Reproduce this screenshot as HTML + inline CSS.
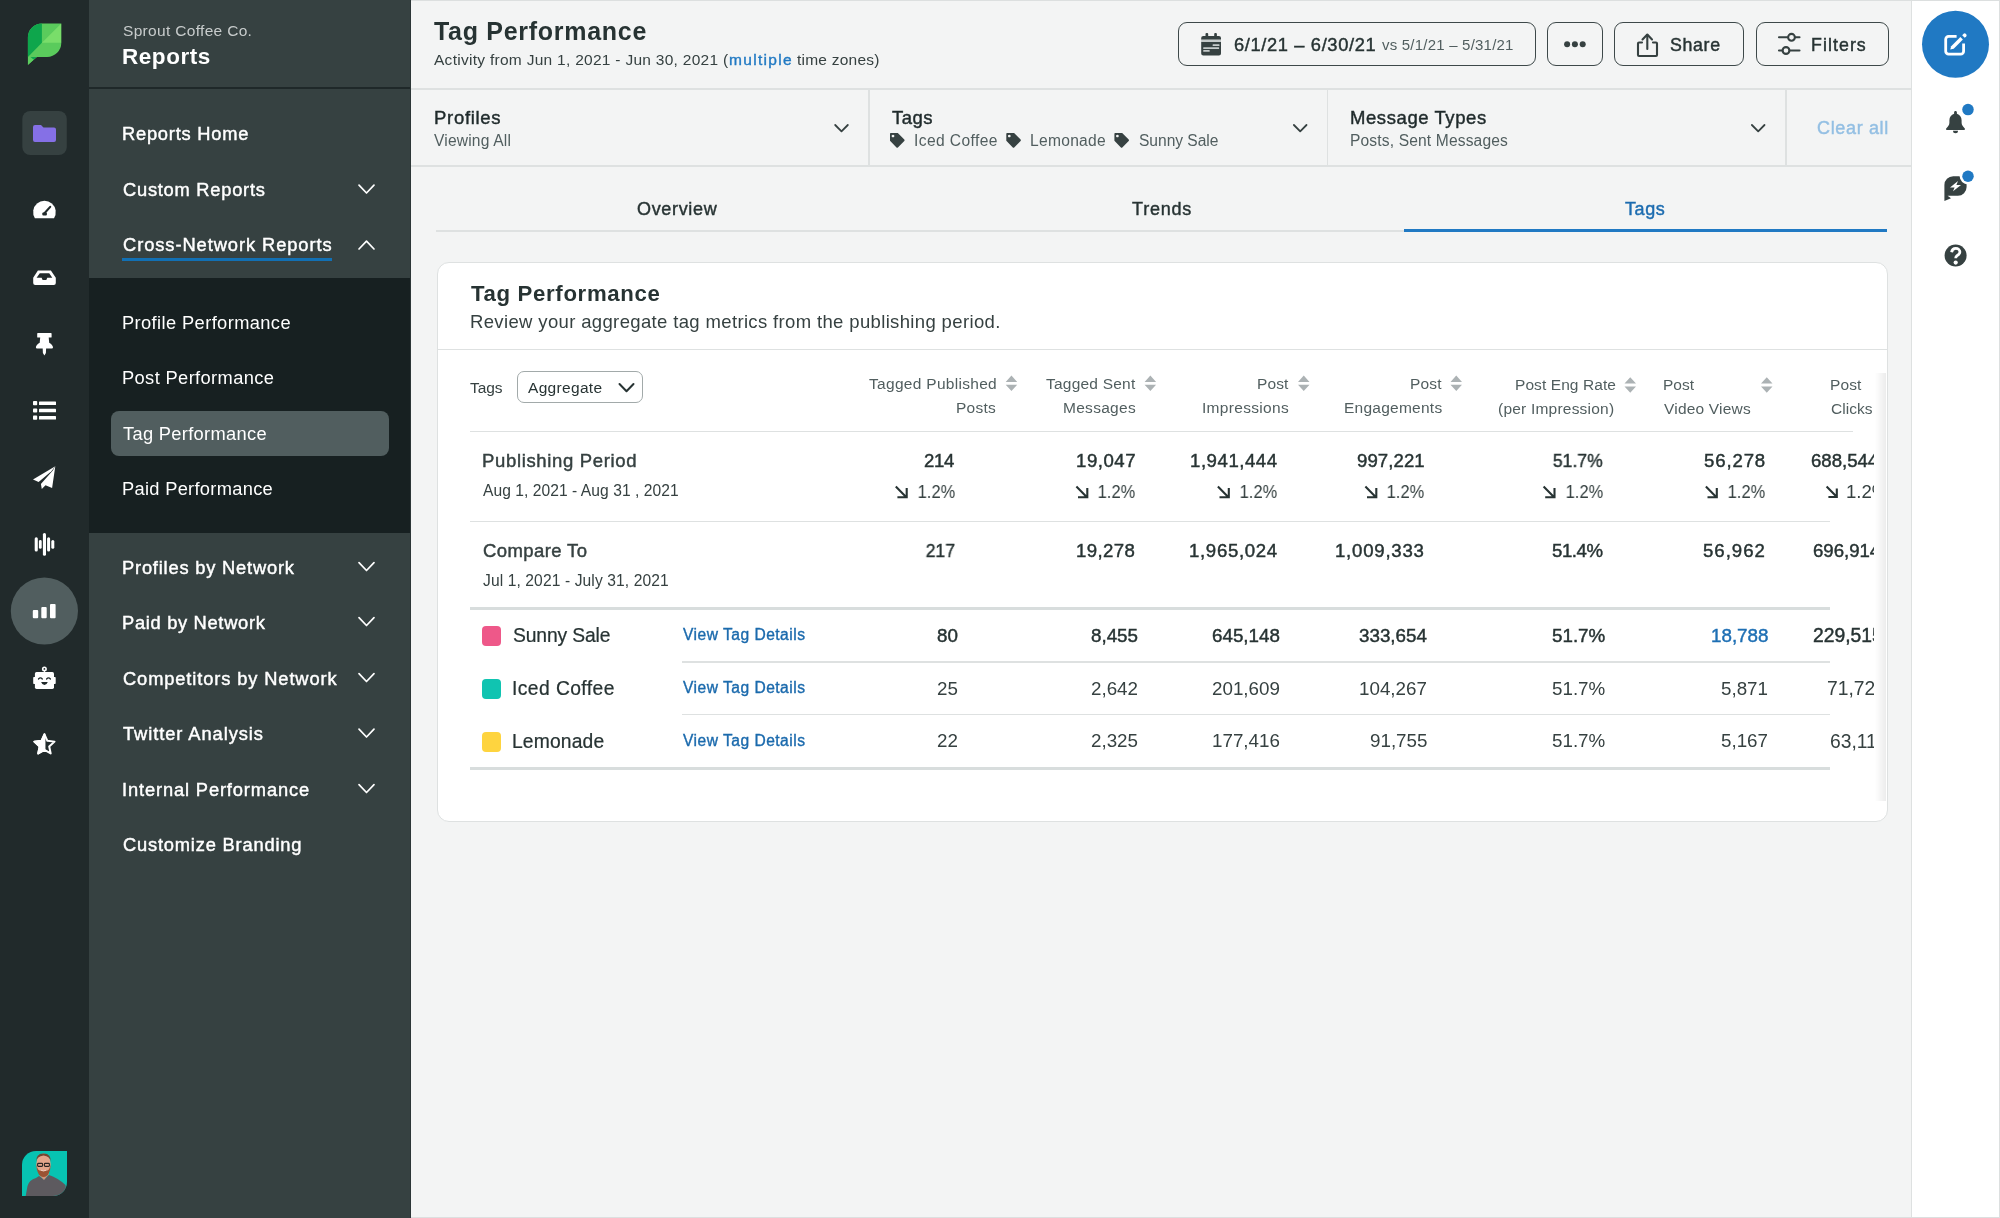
<!DOCTYPE html>
<html><head><meta charset="utf-8"><title>Tag Performance</title>
<style>
html,body{margin:0;padding:0;}
body{width:2000px;height:1218px;position:relative;overflow:hidden;background:#F3F4F4;font-family:"Liberation Sans",sans-serif;}
.t{position:absolute;line-height:1;white-space:nowrap;will-change:transform;}
.b{position:absolute;box-sizing:border-box;}
svg{position:absolute;overflow:visible;}
</style></head><body>
<div class="b" style="left:0px;top:0px;width:89px;height:1218px;background:#212a2b;"></div>
<div class="b" style="left:89px;top:0px;width:322px;height:1218px;background:#364141;"></div>
<div class="b" style="left:89px;top:87px;width:322px;height:2px;background:#1f2829;"></div>
<div class="b" style="left:89px;top:278px;width:322px;height:255px;background:#172021;"></div>
<div class="b" style="left:111px;top:411px;width:278px;height:44.5px;background:#515e5f;border-radius:8px;"></div>
<div class="b" style="left:1911px;top:0px;width:89px;height:1218px;background:#ffffff;border-left:1.5px solid #dee1e1;"></div>
<svg style="left:0;top:0" width="89" height="1218" viewBox="0 0 89 1218">
<defs><clipPath id="leaf"><path d="M27.9,37.5 A14.1,14.1 0 0 1 42,23.5 H61.3 V42.8 A14.2,14.2 0 0 1 47.1,57 H36.9 L27.9,65 Z"/></clipPath></defs>
<g clip-path="url(#leaf)">
<rect x="20" y="20" width="50" height="50" fill="#5acb5c"/>
<polygon points="20,20 41.9,20 41.9,42.8 27.9,57 20,57" fill="#0ea64c"/>
<polygon points="41.9,42.8 61.3,42.8 61.3,23.5" fill="#79dd6a"/>
<polygon points="27.9,57 36.9,57 27.9,65" fill="#5dce60"/>
<polygon points="30.5,57 36.9,57 33.8,59.8" fill="#0ea64c"/>
</g>
<rect x="22.3" y="111" width="44.5" height="44" rx="8" fill="#364141"/>
<path d="M33,127 a2,2 0 0 1 2,-2 h6 l2.5,2.5 h10.5 a2,2 0 0 1 2,2 v10.5 a2,2 0 0 1 -2,2 h-19 a2,2 0 0 1 -2,-2 z" fill="#8570e6"/>
<path d="M34.9,218.2 A11.3,11.3 0 1 1 54,218.2 Z" fill="#fff"/>
<path d="M44,213.8 L50.2,206.9" stroke="#212a2b" stroke-width="2.1" stroke-linecap="round"/>
<rect x="42.3" y="212.4" width="4.6" height="3.1" rx="1" fill="#212a2b"/>
<path d="M37.9,270.6 H50.9 L55.8,277.8 V283 a2,2 0 0 1 -2,2 H35.2 a2,2 0 0 1 -2,-2 V277.8 Z M39.8,273.2 H49.2 L52.3,277.8 H47.3 L46.3,279.9 H42.6 L41.6,277.8 H36.6 Z" fill="#fff" fill-rule="evenodd"/>
<path d="M37.8,333.1 H51 a0.6,0.6 0 0 1 0.6,0.6 V336.9 a0.6,0.6 0 0 1 -0.6,0.6 H48.7 L49.2,342.7 C51.5,343.8 53,346 53,347.6 a0.8,0.8 0 0 1 -0.8,0.8 H46.1 L45.9,353 L44.4,355.6 L42.9,353 L42.7,348.4 H36.7 a0.8,0.8 0 0 1 -0.8,-0.8 C35.9,346 37.4,343.8 39.7,342.7 L40.2,337.5 H37.8 a0.6,0.6 0 0 1 -0.6,-0.6 V333.7 a0.6,0.6 0 0 1 0.6,-0.6 Z" fill="#fff"/>
<rect x="33" y="401" width="4.2" height="4.2" rx="0.8" fill="#fff"/>
<rect x="39" y="401.5" width="17" height="3.5" rx="0.6" fill="#fff"/>
<rect x="33" y="408.4" width="4.2" height="4.2" rx="0.8" fill="#fff"/>
<rect x="39" y="408.8" width="17" height="3.5" rx="0.6" fill="#fff"/>
<rect x="33" y="415.6" width="4.2" height="4.2" rx="0.8" fill="#fff"/>
<rect x="39" y="416" width="17" height="3.5" rx="0.6" fill="#fff"/>
<path d="M55.3,466.3 L33,479.5 L38.6,482 L51.4,471.2 Z" fill="#fff"/>
<path d="M55.3,466.3 L52.1,488 L45.5,485.3 L41.8,489 L40.9,483.9 L52.8,470.6 Z" fill="#fff"/>
<rect x="34.7" y="537.2" width="3.1" height="14.3" rx="1.5" fill="#fff"/>
<rect x="38.9" y="540" width="2.8" height="8.8" rx="1.4" fill="#fff"/>
<rect x="42.9" y="533" width="3.1" height="22.8" rx="1.5" fill="#fff"/>
<rect x="47.1" y="537.2" width="3" height="14.3" rx="1.5" fill="#fff"/>
<rect x="51.3" y="540" width="3" height="8.8" rx="1.5" fill="#fff"/>
<circle cx="44.4" cy="611" r="33.6" fill="#515e5f"/>
<rect x="32.8" y="610" width="5.4" height="8.2" rx="1" fill="#fff"/>
<rect x="41.3" y="607" width="5.4" height="11.2" rx="1" fill="#fff"/>
<rect x="50" y="604" width="5.6" height="14.2" rx="1" fill="#fff"/>
<circle cx="44.4" cy="668.9" r="2.5" fill="#fff"/>
<circle cx="44.4" cy="668.9" r="0.9" fill="#212a2b"/>
<rect x="43.9" y="670.5" width="1" height="2.5" fill="#fff"/>
<rect x="34.9" y="672.1" width="19.1" height="16.8" rx="1.6" fill="#fff"/>
<rect x="33.2" y="677" width="22.5" height="7.1" rx="0.8" fill="#fff"/>
<path d="M38.5,679 q1.9,-2.3 3.8,0 M46.6,679 q1.9,-2.3 3.8,0" fill="none" stroke="#212a2b" stroke-width="1.3" stroke-linecap="round"/>
<path d="M41.1,682 h6.7 q-1,2.9 -3.35,2.9 q-2.35,0 -3.35,-2.9 z" fill="#212a2b"/>
<polygon points="44.45,734.3 47.39,740.85 54.53,741.62 49.21,746.45 50.68,753.48 44.45,749.9 38.22,753.48 39.69,746.45 34.37,741.62 41.51,740.85" fill="none" stroke="#fff" stroke-width="2" stroke-linejoin="round"/>
<polygon points="44.45,734.3 41.51,740.85 34.37,741.62 39.69,746.45 38.22,753.48 44.45,749.9" fill="#fff" stroke="#fff" stroke-width="2" stroke-linejoin="round"/>
<defs><clipPath id="av"><path d="M22,1165 A14,14 0 0 1 36,1151 H67 V1182 A14,14 0 0 1 53,1196 H22 Z"/></clipPath></defs>
<g clip-path="url(#av)">
<rect x="20" y="1149" width="50" height="50" fill="#07c3b2"/>
<path d="M25.5,1197 L27.5,1186 Q29,1180 36,1178 L39,1176 L44,1179.5 L49,1175 Q58,1178 65.5,1185 L67,1197 Z" fill="#5d5a5f"/>
<path d="M39,1175 L44,1180 L49,1174 L48,1170 L40,1170 Z" fill="#d49278"/>
<ellipse cx="43.5" cy="1164.3" rx="7.2" ry="10.8" fill="#e3a58b"/>
<path d="M36.3,1163 Q36.5,1176.7 43.5,1177 Q50.5,1176.7 50.7,1163 Q50,1169.5 47.5,1170.5 Q43.5,1171.5 39.5,1170.5 Q37,1169.5 36.3,1163 Z" fill="#9a5333"/>
<path d="M36.2,1162 Q35.8,1153.2 43.5,1153.4 Q51.2,1153.2 50.8,1162 Q50.2,1156.2 43.5,1155.6 Q36.8,1156.2 36.2,1162 Z" fill="#734632"/>
<rect x="37.6" y="1163.4" width="5" height="3" rx="0.8" fill="none" stroke="#2b2624" stroke-width="1.1"/>
<rect x="44.4" y="1163.4" width="5" height="3" rx="0.8" fill="none" stroke="#2b2624" stroke-width="1.1"/>
<path d="M41,1170.2 Q43.5,1171.8 46,1170.2" fill="none" stroke="#f2d2c4" stroke-width="0.9"/>
</g>
</svg>
<div class="t" style="left:122.8px;top:23px;font-size:15.5px;color:#c8cccc;letter-spacing:0.32px;">Sprout Coffee Co.</div>
<div class="t" style="left:122.2px;top:46px;font-size:22.5px;font-weight:700;color:#ffffff;letter-spacing:0.55px;">Reports</div>
<div class="t" style="left:121.8px;top:125px;font-size:18.3px;-webkit-text-stroke:0.44px #ffffff;color:#ffffff;letter-spacing:0.779px;">Reports Home</div>
<div class="t" style="left:122.8px;top:181px;font-size:18.3px;-webkit-text-stroke:0.44px #ffffff;color:#ffffff;letter-spacing:0.756px;">Custom Reports</div>
<div class="t" style="left:122.8px;top:236px;font-size:18.3px;-webkit-text-stroke:0.44px #ffffff;color:#ffffff;letter-spacing:0.932px;">Cross-Network Reports</div>
<div class="b" style="left:122.2px;top:258.3px;width:210px;height:2.9px;background:#1270b4;"></div>
<div class="t" style="left:122.2px;top:314px;font-size:18.3px;color:#ffffff;letter-spacing:0.39px;">Profile Performance</div>
<div class="t" style="left:122.2px;top:369px;font-size:18.3px;color:#ffffff;letter-spacing:0.377px;">Post Performance</div>
<div class="t" style="left:123.2px;top:425px;font-size:18.3px;color:#ffffff;letter-spacing:0.312px;">Tag Performance</div>
<div class="t" style="left:122.2px;top:480px;font-size:18.3px;color:#ffffff;letter-spacing:0.296px;">Paid Performance</div>
<div class="t" style="left:121.8px;top:559px;font-size:18.3px;-webkit-text-stroke:0.44px #ffffff;color:#ffffff;letter-spacing:0.802px;">Profiles by Network</div>
<div class="t" style="left:121.8px;top:614px;font-size:18.3px;-webkit-text-stroke:0.44px #ffffff;color:#ffffff;letter-spacing:0.693px;">Paid by Network</div>
<div class="t" style="left:122.8px;top:670px;font-size:18.3px;-webkit-text-stroke:0.44px #ffffff;color:#ffffff;letter-spacing:0.883px;">Competitors by Network</div>
<div class="t" style="left:122.8px;top:725px;font-size:18.3px;-webkit-text-stroke:0.44px #ffffff;color:#ffffff;letter-spacing:0.928px;">Twitter Analysis</div>
<div class="t" style="left:121.8px;top:781px;font-size:18.3px;-webkit-text-stroke:0.44px #ffffff;color:#ffffff;letter-spacing:0.864px;">Internal Performance</div>
<div class="t" style="left:122.8px;top:836px;font-size:18.3px;-webkit-text-stroke:0.44px #ffffff;color:#ffffff;letter-spacing:0.813px;">Customize Branding</div>
<svg style="left:0;top:0" width="411" height="1218"><g fill="none" stroke="#fff" stroke-width="1.7" stroke-linecap="round" stroke-linejoin="round"><path d="M359,185.2 L366.5,193.0 L374,185.2" /><path d="M359,249.0 L366.5,241.2 L374,249.0" /><path d="M359,562.7 L366.5,570.5 L374,562.7" /><path d="M359,617.7 L366.5,625.5 L374,617.7" /><path d="M359,673.7 L366.5,681.5 L374,673.7" /><path d="M359,729.2 L366.5,737.0 L374,729.2" /><path d="M359,784.7 L366.5,792.5 L374,784.7" /></g></svg>
<div class="t" style="left:434.4px;top:19px;font-size:25px;font-weight:700;color:#273333;letter-spacing:0.709px;">Tag Performance</div>
<div class="t" style="left:434px;top:52px;font-size:15.5px;color:#364141;letter-spacing:0.282px;">Activity from Jun 1, 2021 - Jun 30, 2021 (</div>
<div class="t" style="left:728.9px;top:52px;font-size:15.5px;-webkit-text-stroke:0.37px #2079c3;color:#2079c3;letter-spacing:1.32px;">multiple</div>
<div class="t" style="left:796.8px;top:52px;font-size:15.5px;color:#364141;letter-spacing:0.235px;">time zones)</div>
<div class="b" style="left:1178px;top:22px;width:358px;height:44.3px;border:1.8px solid #3d4849;border-radius:9px;"></div>
<div class="b" style="left:1547px;top:22px;width:55.5px;height:44.3px;border:1.8px solid #3d4849;border-radius:9px;"></div>
<div class="b" style="left:1614px;top:22px;width:130px;height:44.3px;border:1.8px solid #3d4849;border-radius:9px;"></div>
<div class="b" style="left:1756px;top:22px;width:133px;height:44.3px;border:1.8px solid #3d4849;border-radius:9px;"></div>
<div class="t" style="left:1233.8px;top:36px;font-size:18.3px;-webkit-text-stroke:0.44px #273333;color:#273333;letter-spacing:0.632px;">6/1/21 &ndash; 6/30/21</div>
<div class="t" style="left:1381.7px;top:37px;font-size:15px;color:#515e5f;letter-spacing:0.214px;">vs 5/1/21 &ndash; 5/31/21</div>
<div class="t" style="left:1670px;top:37px;font-size:17.8px;-webkit-text-stroke:0.43px #273333;color:#273333;letter-spacing:0.653px;">Share</div>
<div class="t" style="left:1811px;top:37px;font-size:17.8px;-webkit-text-stroke:0.43px #273333;color:#273333;letter-spacing:1.06px;">Filters</div>
<svg style="left:0;top:0" width="2000" height="80">
<g fill="#364141">
<rect x="1205.5" y="33" width="2.7" height="4" rx="1"/><rect x="1214.2" y="33" width="2.7" height="4" rx="1"/>
<path d="M1201.2,38 a2.1,2.1 0 0 1 2.1,-2.1 h15.6 a2.1,2.1 0 0 1 2.1,2.1 v1.7 h-19.8 z"/>
<path d="M1201.2,41.7 h19.8 v11.7 a2.1,2.1 0 0 1 -2.1,2.1 h-15.6 a2.1,2.1 0 0 1 -2.1,-2.1 z"/>
</g>
<g fill="#c5caca"><rect x="1201.2" y="39.7" width="19.8" height="2"/><rect x="1212.6" y="44.3" width="6.9" height="1.6" rx="0.5"/><rect x="1203.2" y="47.2" width="15.9" height="1.8" rx="0.5"/><rect x="1203.2" y="50.1" width="6.5" height="1.6" rx="0.5"/></g>
<circle cx="1567.1" cy="44.2" r="3" fill="#364141"/><circle cx="1574.9" cy="44.2" r="3" fill="#364141"/><circle cx="1582.7" cy="44.2" r="3" fill="#364141"/>
<g fill="none" stroke="#364141" stroke-width="2.1" stroke-linecap="round" stroke-linejoin="round">
<path d="M1642,42.5 h-3 a1,1 0 0 0 -1,1 v11.5 a1,1 0 0 0 1,1 h17 a1,1 0 0 0 1,-1 v-11.5 a1,1 0 0 0 -1,-1 h-3"/>
<path d="M1647.3,49 V35"/><path d="M1642.5,39.5 L1647.3,34.5 L1652,39.5"/>
<path d="M1779,37.3 h8.2 M1795.8,37.3 h3.7 M1779,50.5 h3.2 M1789.8,50.5 h9.7"/>
<circle cx="1791.5" cy="37.3" r="3.4"/><circle cx="1786" cy="50.5" r="3.4"/>
</g>
</svg>
<div class="b" style="left:411px;top:88px;width:1500px;height:1.5px;background:#dee1e1;"></div>
<div class="b" style="left:411px;top:165px;width:1500px;height:1.5px;background:#dee1e1;"></div>
<div class="b" style="left:868px;top:88px;width:1.5px;height:78px;background:#dee1e1;"></div>
<div class="b" style="left:1326.5px;top:88px;width:1.5px;height:78px;background:#dee1e1;"></div>
<div class="b" style="left:1785px;top:88px;width:1.5px;height:78px;background:#dee1e1;"></div>
<div class="t" style="left:433.75px;top:109px;font-size:18.5px;-webkit-text-stroke:0.44px #1f2a2b;color:#1f2a2b;letter-spacing:0.696px;">Profiles</div>
<div class="t" style="left:434px;top:133px;font-size:15.6px;color:#515e5f;letter-spacing:0.173px;">Viewing All</div>
<div class="t" style="left:892.3px;top:109px;font-size:18.5px;-webkit-text-stroke:0.44px #1f2a2b;color:#1f2a2b;letter-spacing:0.477px;">Tags</div>
<div class="t" style="left:913.7px;top:133px;font-size:15.6px;color:#515e5f;letter-spacing:0.39px;">Iced Coffee</div>
<div class="t" style="left:1030px;top:133px;font-size:15.6px;color:#515e5f;letter-spacing:0.282px;">Lemonade</div>
<div class="t" style="left:1139px;top:133px;font-size:15.6px;color:#515e5f;letter-spacing:-0.032px;">Sunny Sale</div>
<div class="t" style="left:1349.6px;top:109px;font-size:18.5px;-webkit-text-stroke:0.44px #1f2a2b;color:#1f2a2b;letter-spacing:0.579px;">Message Types</div>
<div class="t" style="left:1349.6px;top:133px;font-size:15.6px;color:#515e5f;letter-spacing:0.14px;">Posts, Sent Messages</div>
<div class="t" style="left:1817.3px;top:119px;font-size:18px;-webkit-text-stroke:0.43px #93bfe3;color:#93bfe3;letter-spacing:0.656px;">Clear all</div>
<svg style="left:0;top:0" width="2000" height="200"><path transform="translate(890,133)" d="M0,0.8 a0.8,0.8 0 0 1 0.8,-0.8 H7.8 L14.3,6.6 a1,1 0 0 1 0,1.4 L7.9,14.4 a1,1 0 0 1 -1.4,0 L0,7.8 Z M3,1.65 a1.35,1.35 0 1 0 0.001,0 Z" fill="#364141" fill-rule="evenodd"/><path transform="translate(1006.3,133)" d="M0,0.8 a0.8,0.8 0 0 1 0.8,-0.8 H7.8 L14.3,6.6 a1,1 0 0 1 0,1.4 L7.9,14.4 a1,1 0 0 1 -1.4,0 L0,7.8 Z M3,1.65 a1.35,1.35 0 1 0 0.001,0 Z" fill="#364141" fill-rule="evenodd"/><path transform="translate(1114.4,133)" d="M0,0.8 a0.8,0.8 0 0 1 0.8,-0.8 H7.8 L14.3,6.6 a1,1 0 0 1 0,1.4 L7.9,14.4 a1,1 0 0 1 -1.4,0 L0,7.8 Z M3,1.65 a1.35,1.35 0 1 0 0.001,0 Z" fill="#364141" fill-rule="evenodd"/><g fill="none" stroke="#364141" stroke-width="1.8" stroke-linecap="round" stroke-linejoin="round"><path d="M835.2,125 L841.5,131.3 L847.8,125"/><path d="M1293.9,125 L1300.2,131.3 L1306.5,125"/><path d="M1751.9,125 L1758.2,131.3 L1764.5,125"/></g></svg>
<div class="b" style="left:436px;top:230px;width:1451px;height:1.5px;background:#dee1e1;"></div>
<div class="b" style="left:1404px;top:229px;width:483px;height:3px;background:#2079c3;"></div>
<div class="t" style="left:637px;top:200px;font-size:18px;-webkit-text-stroke:0.43px #273333;color:#273333;letter-spacing:0.665px;">Overview</div>
<div class="t" style="left:1131.5px;top:200px;font-size:18px;-webkit-text-stroke:0.43px #273333;color:#273333;letter-spacing:0.803px;">Trends</div>
<div class="t" style="left:1625.2px;top:200px;font-size:18px;-webkit-text-stroke:0.43px #1c6cb0;color:#1c6cb0;letter-spacing:0.616px;">Tags</div>
<div class="b" style="left:436.5px;top:261.5px;width:1451px;height:560.5px;background:#fff;border:1px solid #dee1e1;border-radius:12px;"></div>
<div class="b" style="left:437.5px;top:348.5px;width:1449px;height:1.5px;background:#dee1e1;"></div>
<div class="t" style="left:470.5px;top:283px;font-size:22.2px;font-weight:700;color:#273333;letter-spacing:0.659px;">Tag Performance</div>
<div class="t" style="left:470px;top:313px;font-size:18.5px;color:#364141;letter-spacing:0.355px;">Review your aggregate tag metrics from the publishing period.</div>
<div class="t" style="left:470.1px;top:380px;font-size:15.5px;color:#364141;letter-spacing:-0.064px;">Tags</div>
<div class="b" style="left:517px;top:371.3px;width:125.6px;height:32.1px;border:1.3px solid #a2aaaa;border-radius:7px;background:#fff;"></div>
<div class="t" style="left:528.4px;top:380px;font-size:15.5px;color:#273333;letter-spacing:0.324px;">Aggregate</div>
<div class="t" style="right:1002.98px;text-align:right;top:376px;font-size:15.5px;color:#515e5f;letter-spacing:0.299px;margin-right:-0.299px;">Tagged Published</div>
<div class="t" style="right:1003.85px;text-align:right;top:400px;font-size:15.5px;color:#515e5f;letter-spacing:0.271px;margin-right:-0.271px;">Posts</div>
<div class="t" style="right:864.79px;text-align:right;top:376px;font-size:15.5px;color:#515e5f;letter-spacing:0.216px;margin-right:-0.216px;">Tagged Sent</div>
<div class="t" style="right:864.3499999999999px;text-align:right;top:400px;font-size:15.5px;color:#515e5f;letter-spacing:0.287px;margin-right:-0.287px;">Messages</div>
<div class="t" style="right:711.29px;text-align:right;top:376px;font-size:15.5px;color:#515e5f;letter-spacing:0.097px;margin-right:-0.097px;">Post</div>
<div class="t" style="right:710.8499999999999px;text-align:right;top:400px;font-size:15.5px;color:#515e5f;letter-spacing:0.31px;margin-right:-0.31px;">Impressions</div>
<div class="t" style="right:558.79px;text-align:right;top:376px;font-size:15.5px;color:#515e5f;letter-spacing:0.197px;margin-right:-0.197px;">Post</div>
<div class="t" style="right:558.3499999999999px;text-align:right;top:400px;font-size:15.5px;color:#515e5f;letter-spacing:0.25px;margin-right:-0.25px;">Engagements</div>
<div class="t" style="right:383.98px;text-align:right;top:377px;font-size:15.5px;color:#515e5f;letter-spacing:0.081px;margin-right:-0.081px;">Post Eng Rate</div>
<div class="t" style="right:385.44000000000005px;text-align:right;top:401px;font-size:15.5px;color:#515e5f;letter-spacing:0.215px;margin-right:-0.215px;">(per Impression)</div>
<div class="t" style="left:1663.4px;top:377px;font-size:15.5px;color:#515e5f;letter-spacing:0.03px;">Post</div>
<div class="t" style="left:1664.4px;top:401px;font-size:15.5px;color:#515e5f;letter-spacing:0.191px;">Video Views</div>
<div class="t" style="left:1830.1px;top:377px;font-size:15.5px;color:#515e5f;letter-spacing:0.097px;">Post</div>
<div class="t" style="left:1831.1px;top:401px;font-size:15.5px;color:#515e5f;letter-spacing:0.024px;">Clicks</div>
<div class="b" style="left:470px;top:430.5px;width:1383.4px;height:1.5px;background:#dee1e1;"></div>
<div class="b" style="left:469.5px;top:520.5px;width:1360.8px;height:1.5px;background:#dee1e1;"></div>
<div class="b" style="left:469.5px;top:607px;width:1360.8px;height:2.5px;background:#d8dddd;"></div>
<div class="b" style="left:682px;top:661px;width:1148.3px;height:1.5px;background:#dee1e1;"></div>
<div class="b" style="left:682px;top:713.5px;width:1148.3px;height:1.5px;background:#dee1e1;"></div>
<div class="b" style="left:469.5px;top:767px;width:1360.8px;height:2.5px;background:#d8dddd;"></div>
<div class="t" style="left:482.2px;top:452px;font-size:18.5px;-webkit-text-stroke:0.44px #364141;color:#364141;letter-spacing:0.654px;">Publishing Period</div>
<div class="t" style="left:482.5px;top:483px;font-size:15.6px;color:#364141;letter-spacing:0.054px;">Aug 1, 2021 - Aug 31 , 2021</div>
<div class="t" style="left:483px;top:542px;font-size:18.5px;-webkit-text-stroke:0.44px #364141;color:#364141;letter-spacing:0.398px;">Compare To</div>
<div class="t" style="left:482.5px;top:573px;font-size:15.6px;color:#364141;letter-spacing:0.106px;">Jul 1, 2021 - July 31, 2021</div>
<div class="t" style="right:1045.26px;text-align:right;top:452px;font-size:18.6px;-webkit-text-stroke:0.45px #273333;color:#273333;letter-spacing:-0.366px;margin-right:0.366px;">214</div>
<div class="t" style="right:1044.83px;text-align:right;top:483px;font-size:18.6px;color:#364141;transform:scaleX(0.8911);transform-origin:right center;">1.2%</div>
<div class="t" style="right:1045.28px;text-align:right;top:542px;font-size:18.6px;-webkit-text-stroke:0.45px #273333;color:#273333;transform:scaleX(0.9444);transform-origin:right center;">217</div>
<div class="t" style="right:864.6600000000001px;text-align:right;top:452px;font-size:18.6px;-webkit-text-stroke:0.45px #273333;color:#273333;letter-spacing:0.544px;margin-right:-0.544px;">19,047</div>
<div class="t" style="right:864.23px;text-align:right;top:483px;font-size:18.6px;color:#364141;transform:scaleX(0.8911);transform-origin:right center;">1.2%</div>
<div class="t" style="right:864.6600000000001px;text-align:right;top:542px;font-size:18.6px;-webkit-text-stroke:0.45px #273333;color:#273333;letter-spacing:0.404px;margin-right:-0.404px;">19,278</div>
<div class="t" style="right:723.1600000000001px;text-align:right;top:452px;font-size:18.6px;-webkit-text-stroke:0.45px #273333;color:#273333;letter-spacing:0.547px;margin-right:-0.547px;">1,941,444</div>
<div class="t" style="right:722.73px;text-align:right;top:483px;font-size:18.6px;color:#364141;transform:scaleX(0.8911);transform-origin:right center;">1.2%</div>
<div class="t" style="right:723.1600000000001px;text-align:right;top:542px;font-size:18.6px;-webkit-text-stroke:0.45px #273333;color:#273333;letter-spacing:0.684px;margin-right:-0.684px;">1,965,024</div>
<div class="t" style="right:575.6600000000001px;text-align:right;top:452px;font-size:18.6px;-webkit-text-stroke:0.45px #273333;color:#273333;letter-spacing:0.08px;margin-right:-0.08px;">997,221</div>
<div class="t" style="right:575.23px;text-align:right;top:483px;font-size:18.6px;color:#364141;transform:scaleX(0.8911);transform-origin:right center;">1.2%</div>
<div class="t" style="right:575.6600000000001px;text-align:right;top:542px;font-size:18.6px;-webkit-text-stroke:0.45px #273333;color:#273333;letter-spacing:0.772px;margin-right:-0.772px;">1,009,333</div>
<div class="t" style="right:397.29999999999995px;text-align:right;top:452px;font-size:18.6px;-webkit-text-stroke:0.45px #273333;color:#273333;transform:scaleX(0.9461);transform-origin:right center;">51.7%</div>
<div class="t" style="right:397.03px;text-align:right;top:483px;font-size:18.6px;color:#364141;transform:scaleX(0.8911);transform-origin:right center;">1.2%</div>
<div class="t" style="right:397.27px;text-align:right;top:542px;font-size:18.6px;-webkit-text-stroke:0.45px #273333;color:#273333;letter-spacing:-0.41px;margin-right:0.41px;">51.4%</div>
<div class="t" style="right:235.16000000000008px;text-align:right;top:452px;font-size:18.6px;-webkit-text-stroke:0.45px #273333;color:#273333;letter-spacing:0.864px;margin-right:-0.864px;">56,278</div>
<div class="t" style="right:234.73000000000002px;text-align:right;top:483px;font-size:18.6px;color:#364141;transform:scaleX(0.8911);transform-origin:right center;">1.2%</div>
<div class="t" style="right:235.16000000000008px;text-align:right;top:542px;font-size:18.6px;-webkit-text-stroke:0.45px #273333;color:#273333;letter-spacing:1.004px;margin-right:-1.004px;">56,962</div>
<div class="b" style="left:482.1px;top:626.1px;width:19.4px;height:19.6px;background:#ee5889;border-radius:4px;"></div>
<div class="t" style="left:513.2px;top:626px;font-size:19.3px;-webkit-text-stroke:0.23px #273333;color:#273333;letter-spacing:-0.133px;">Sunny Sale</div>
<div class="t" style="left:682.75px;top:627px;font-size:15.6px;-webkit-text-stroke:0.37px #1b6aad;color:#1b6aad;letter-spacing:0.483px;">View Tag Details</div>
<div class="t" style="right:1042.25px;text-align:right;top:627px;font-size:18.8px;-webkit-text-stroke:0.45px #273333;color:#273333;">80</div>
<div class="t" style="right:861.55px;text-align:right;top:627px;font-size:18.8px;-webkit-text-stroke:0.45px #273333;color:#273333;">8,455</div>
<div class="t" style="right:719.95px;text-align:right;top:627px;font-size:18.8px;-webkit-text-stroke:0.45px #273333;color:#273333;">645,148</div>
<div class="t" style="right:572.75px;text-align:right;top:627px;font-size:18.8px;-webkit-text-stroke:0.45px #273333;color:#273333;">333,654</div>
<div class="t" style="right:394.79999999999995px;text-align:right;top:627px;font-size:18.8px;-webkit-text-stroke:0.45px #273333;color:#273333;">51.7%</div>
<div class="t" style="right:232.04999999999995px;text-align:right;top:627px;font-size:18.8px;-webkit-text-stroke:0.45px #1e6fb4;color:#1e6fb4;">18,788</div>
<div class="b" style="left:482.1px;top:679.1px;width:19.4px;height:19.6px;background:#10c4b1;border-radius:4px;"></div>
<div class="t" style="left:512.2px;top:679px;font-size:19.3px;-webkit-text-stroke:0.23px #273333;color:#273333;letter-spacing:0.416px;">Iced Coffee</div>
<div class="t" style="left:682.75px;top:680px;font-size:15.6px;-webkit-text-stroke:0.37px #1b6aad;color:#1b6aad;letter-spacing:0.483px;">View Tag Details</div>
<div class="t" style="right:1042.25px;text-align:right;top:680px;font-size:18.8px;color:#364141;">25</div>
<div class="t" style="right:861.55px;text-align:right;top:680px;font-size:18.8px;color:#364141;">2,642</div>
<div class="t" style="right:719.95px;text-align:right;top:680px;font-size:18.8px;color:#364141;">201,609</div>
<div class="t" style="right:572.75px;text-align:right;top:680px;font-size:18.8px;color:#364141;">104,267</div>
<div class="t" style="right:394.79999999999995px;text-align:right;top:680px;font-size:18.8px;color:#364141;">51.7%</div>
<div class="t" style="right:232.04999999999995px;text-align:right;top:680px;font-size:18.8px;color:#364141;">5,871</div>
<div class="b" style="left:482.1px;top:732.1px;width:19.4px;height:19.6px;background:#fed43f;border-radius:4px;"></div>
<div class="t" style="left:512.2px;top:732px;font-size:19.3px;-webkit-text-stroke:0.23px #273333;color:#273333;letter-spacing:0.143px;">Lemonade</div>
<div class="t" style="left:682.75px;top:733px;font-size:15.6px;-webkit-text-stroke:0.37px #1b6aad;color:#1b6aad;letter-spacing:0.483px;">View Tag Details</div>
<div class="t" style="right:1042.25px;text-align:right;top:732px;font-size:18.8px;color:#364141;">22</div>
<div class="t" style="right:861.55px;text-align:right;top:732px;font-size:18.8px;color:#364141;">2,325</div>
<div class="t" style="right:719.95px;text-align:right;top:732px;font-size:18.8px;color:#364141;">177,416</div>
<div class="t" style="right:572.75px;text-align:right;top:732px;font-size:18.8px;color:#364141;">91,755</div>
<div class="t" style="right:394.79999999999995px;text-align:right;top:732px;font-size:18.8px;color:#364141;">51.7%</div>
<div class="t" style="right:232.04999999999995px;text-align:right;top:732px;font-size:18.8px;color:#364141;">5,167</div>
<div class="b" style="left:1790px;top:373px;width:84px;height:420px;overflow:hidden;">
<div class="t" style="left:21.4px;top:79px;font-size:18.6px;-webkit-text-stroke:0.45px #273333;color:#273333;">688,544</div>
<div class="t" style="left:56px;top:110px;font-size:18.6px;color:#364141;">1.2%</div>
<div class="t" style="left:22.8px;top:169px;font-size:18.6px;-webkit-text-stroke:0.45px #273333;color:#273333;">696,914</div>
<div class="t" style="left:22.6px;top:253px;font-size:19.3px;-webkit-text-stroke:0.46px #273333;color:#273333;">229,515</div>
<div class="t" style="left:37px;top:306px;font-size:19.3px;color:#364141;">71,723</div>
<div class="t" style="left:39.8px;top:359px;font-size:19.3px;color:#364141;">63,117</div>
<svg style="left:0;top:0" width="84" height="420"><path d="M36.6,113.6 L46.2,123.2 M38.4,124 H46.8 V115.6" fill="none" stroke="#273333" stroke-width="2.1"/></svg>
</div>
<div class="b" style="left:1874.5px;top:373.3px;width:11.8px;height:427.4px;background:linear-gradient(to right,rgba(255,255,255,0),rgba(0,0,0,0.075));"></div>
<svg style="left:0;top:0" width="2000" height="1218"><g fill="#acb2b4"><path d="M1005.7,381.9 L1011.45,375.5 L1017.2,381.9 Z M1005.7,384.8 L1011.45,391.0 L1017.2,384.8 Z"/><path d="M1144.6,381.9 L1150.35,375.5 L1156.1,381.9 Z M1144.6,384.8 L1150.35,391.0 L1156.1,384.8 Z"/><path d="M1298,381.9 L1303.75,375.5 L1309.5,381.9 Z M1298,384.8 L1303.75,391.0 L1309.5,384.8 Z"/><path d="M1450.5,381.9 L1456.25,375.5 L1462.0,381.9 Z M1450.5,384.8 L1456.25,391.0 L1462.0,384.8 Z"/><path d="M1624.5,383.59999999999997 L1630.25,377.2 L1636.0,383.59999999999997 Z M1624.5,386.5 L1630.25,392.7 L1636.0,386.5 Z"/><path d="M1761,383.59999999999997 L1766.75,377.2 L1772.5,383.59999999999997 Z M1761,386.5 L1766.75,392.7 L1772.5,386.5 Z"/></g><g fill="none" stroke="#273333" stroke-width="2.1"><path d="M895.8,486.6 L906.0999999999999,496.9 M897.3999999999999,497.2 H906.6999999999999 V487.9"/><path d="M1076.4,486.6 L1086.7,496.9 M1078.0,497.2 H1087.3 V487.9"/><path d="M1217.9,486.6 L1228.2,496.9 M1219.5,497.2 H1228.8 V487.9"/><path d="M1365.4,486.6 L1375.7,496.9 M1367.0,497.2 H1376.3 V487.9"/><path d="M1543.6000000000001,486.6 L1553.9,496.9 M1545.2,497.2 H1554.5 V487.9"/><path d="M1705.9,486.6 L1716.2,496.9 M1707.5,497.2 H1716.8 V487.9"/></g><path d="M619.5,384 L626.5,391.3 L633.5,384" fill="none" stroke="#273333" stroke-width="2" stroke-linecap="round" stroke-linejoin="round"/></svg>
<svg style="left:0;top:0" width="2000" height="300">
<circle cx="1955.5" cy="44.3" r="33.5" fill="#2079c3"/>
<path d="M1956.6,36.4 H1948.6 a2.9,2.9 0 0 0 -2.9,2.9 V51.3 a2.9,2.9 0 0 0 2.9,2.9 H1960.7 a2.9,2.9 0 0 0 2.9,-2.9 V43.4" fill="none" stroke="#fff" stroke-width="2.8"/>
<path d="M1950.2,49.6 L1951.2,46.2 L1960.4,37 L1962.9,39.5 L1953.7,48.7 Z" fill="#fff"/>
<path d="M1962.2,35.2 L1963.6,33.8 a1.5,1.5 0 0 1 2.1,0 L1966.2,34.3 a1.5,1.5 0 0 1 0,2.1 L1964.7,37.7 Z" fill="#fff"/>
<g fill="#364141">
<path d="M1955.5,111 c0.8,0 1.4,0.6 1.4,1.4 v1.3 c2.9,0.8 4.7,3.4 4.7,6.5 v2.3 c0,1.5 0.5,2.9 1.5,4 l1.7,1.9 c0.5,0.6 0.1,1.5 -0.7,1.5 h-17.2 c-0.8,0 -1.2,-0.9 -0.7,-1.5 l1.7,-1.9 c1,-1.1 1.5,-2.5 1.5,-4 v-2.3 c0,-3.1 1.8,-5.7 4.7,-6.5 v-1.3 c0,-0.8 0.6,-1.4 1.4,-1.4 z"/>
<path d="M1953,130.7 h5 a2.5,2.5 0 0 1 -5,0 z"/>
<path d="M1944.4,185 A8.8,8.8 0 0 1 1953.2,176.2 H1966.6 V187 A8.7,8.7 0 0 1 1957.9,195.7 H1947.6 L1951,198.3 L1944.4,201 Z"/>
<circle cx="1955.6" cy="255.45" r="11"/>
</g>
<circle cx="1968" cy="176.2" r="8.3" fill="#fff"/>
<circle cx="1968" cy="109.6" r="5.75" fill="#2079c3"/>
<circle cx="1968" cy="176.2" r="5.75" fill="#2079c3"/>
<path d="M1958,181 L1950,187.4 L1954.6,187.4 L1953,191.3 L1961,185 L1956.4,185 Z" fill="#fff"/>
<path d="M1951.6,252.3 C1952,249.6 1953.8,248.4 1955.8,248.4 C1958.2,248.4 1959.9,250 1959.9,252.1 C1959.9,254.3 1957.8,254.9 1956.7,256 C1956,256.7 1955.7,257.3 1955.7,258.3" fill="none" stroke="#fff" stroke-width="2.8"/>
<circle cx="1955.7" cy="262.6" r="2.1" fill="#fff"/>
</svg>
<div class="b" style="left:411px;top:0px;width:1589px;height:1px;background:#dcdfdf;"></div>
<div class="b" style="left:411px;top:1217px;width:1589px;height:1px;background:#dcdfdf;"></div>
<div class="b" style="left:1999px;top:0px;width:1px;height:1218px;background:#dcdfdf;"></div>
<div class="b" style="left:410px;top:0px;width:1px;height:1218px;background:#2c3637;"></div>
</body></html>
